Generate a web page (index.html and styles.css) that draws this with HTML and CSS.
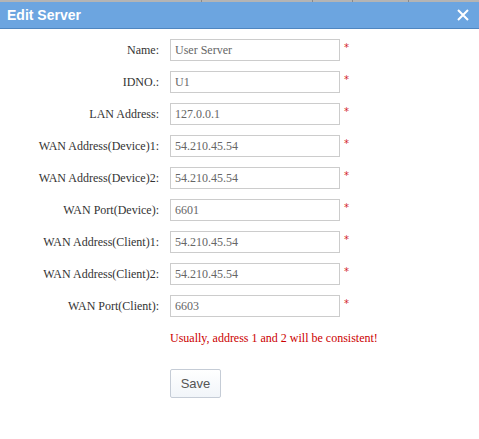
FILE: index.html
```html
<!DOCTYPE html>
<html lang="en">
<head>
  <meta charset="UTF-8">
  <title>Edit Server</title>
  <link rel="stylesheet" href="styles.css">
</head>
<body>
  <!-- strip of the page behind the dialog -->
  <div class="behind">
    <span class="cell c1"></span>
    <span class="cell c2"></span>
    <span class="cell c3"></span>
    <span class="cell c4"></span>
  </div>

  <div class="dialog">
    <div class="dialog-title">
      <span>Edit Server</span>
      <svg class="close" width="12" height="12" viewBox="0 0 12 12">
        <path d="M1 1 L11 11 M11 1 L1 11" stroke="#fff" stroke-width="2" fill="none"/>
      </svg>
    </div>

    <form class="server-form" onsubmit="return false;">
      <div class="row">
        <label>Name:</label>
        <input type="text" value="User Server">
        <span class="req">*</span>
      </div>
      <div class="row">
        <label>IDNO.:</label>
        <input type="text" value="U1">
        <span class="req">*</span>
      </div>
      <div class="row">
        <label>LAN Address:</label>
        <input type="text" value="127.0.0.1">
        <span class="req">*</span>
      </div>
      <div class="row">
        <label>WAN Address(Device)1:</label>
        <input type="text" value="54.210.45.54">
        <span class="req">*</span>
      </div>
      <div class="row">
        <label>WAN Address(Device)2:</label>
        <input type="text" value="54.210.45.54">
        <span class="req">*</span>
      </div>
      <div class="row">
        <label>WAN Port(Device):</label>
        <input type="text" value="6601">
        <span class="req">*</span>
      </div>
      <div class="row">
        <label>WAN Address(Client)1:</label>
        <input type="text" value="54.210.45.54">
        <span class="req">*</span>
      </div>
      <div class="row">
        <label>WAN Address(Client)2:</label>
        <input type="text" value="54.210.45.54">
        <span class="req">*</span>
      </div>
      <div class="row">
        <label>WAN Port(Client):</label>
        <input type="text" value="6603">
        <span class="req">*</span>
      </div>

      <p class="hint">Usually, address 1 and 2 will be consistent!</p>

      <div class="actions">
        <button type="button">Save</button>
      </div>
    </form>
  </div>
</body>
</html>
```

FILE: styles.css
```css
* {
  box-sizing: border-box;
}
body {
  margin: 0;
  padding: 0;
  background: #fff;
  font-family: 'Liberation Serif', serif;
  font-size: 12px;
  color: #333;
}

/* page behind */
.behind {
  display: flex;
  height: 2px;
  background: #b4b4b4;
}
.behind .cell {
  border-right: 1px solid #8a8a8a;
}
.behind .c1 { width: 202px; }
.behind .c2 { width: 111px; }
.behind .c3 { width: 40px; }
.behind .c4 { width: 56px; }

/* title bar */
.dialog-title {
  display: flex;
  justify-content: space-between;
  align-items: center;
  height: 27px;
  padding: 0 10px 0 7px;
  background: #6ca5e0;
  border-bottom: 1px solid #4f86c0;
  color: #fff;
  font-family: 'Liberation Sans', sans-serif;
  font-size: 14px;
  font-weight: bold;
}
.dialog-title .close {
  display: block;
}

/* form */
.server-form {
  padding-top: 10px;
}
.row {
  display: flex;
  align-items: flex-start;
  height: 22px;
  margin-bottom: 10px;
}
.row label {
  width: 159px;
  text-align: right;
  line-height: 22px;
  color: #333;
}
.row input {
  margin-left: 11px;
  width: 170px;
  height: 22px;
  padding: 0 4px;
  border: 1px solid #ccc;
  font-family: 'Liberation Serif', serif;
  font-size: 12px;
  color: #666;
  outline: none;
}
.row .req {
  margin-left: 4px;
  margin-top: 3px;
  color: #d2232a;
  font-family: 'DejaVu Sans', sans-serif;
  font-size: 10px;
}

.hint {
  margin: 14px 0 0 170px;
  color: #c00;
  font-size: 12px;
}
.actions {
  margin: 23px 0 0 170px;
}
.actions button {
  width: 51px;
  height: 29px;
  border: 1px solid #c5ccd6;
  border-radius: 2px;
  background: linear-gradient(#fff, #f1f5f9);
  color: #555;
  font-family: 'Liberation Sans', sans-serif;
  font-size: 13px;
  cursor: pointer;
}
```
